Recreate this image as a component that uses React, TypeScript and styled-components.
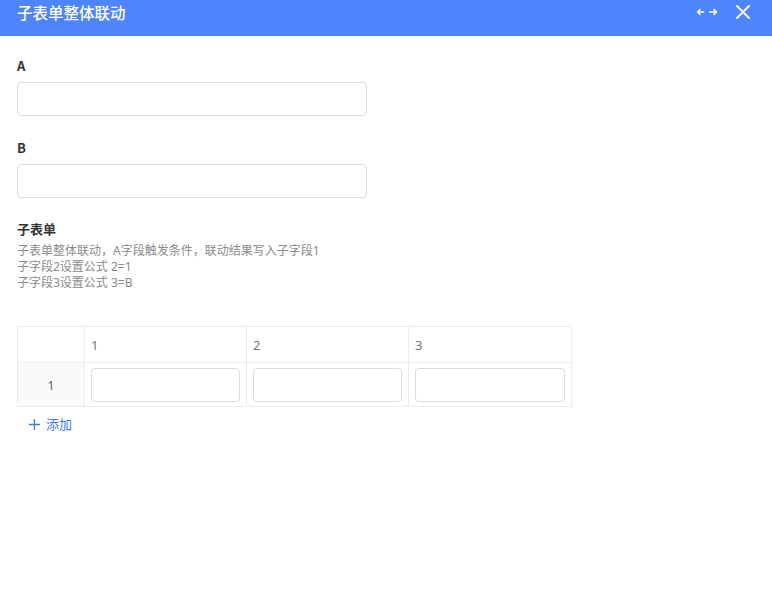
import React from "react";
import styled, { createGlobalStyle } from "styled-components";

const Global = createGlobalStyle`
  html, body { margin: 0; padding: 0; background: #fff; }
  body { font-family: "Noto Sans", "Noto Sans CJK SC", sans-serif; }
  * { box-sizing: border-box; }
`;

const Page = styled.div`
  width: 772px;
  height: 610px;
  background: #fff;
  display: flex;
  flex-direction: column;
`;

const Header = styled.div`
  height: 36px;
  background: #4e84fe;
  display: flex;
  align-items: flex-start;
  justify-content: space-between;
  padding: 0 22px 0 17px;
`;

const Title = styled.div`
  color: #fff;
  font-family: "Noto Sans CJK SC", sans-serif;
  font-size: 15.5px;
  font-weight: 500;
  line-height: 24px;
`;

const Actions = styled.div`
  display: flex;
  align-items: center;
  gap: 18px;
  height: 24px;
`;

const IconBtn = styled.span`
  display: flex;
  align-items: center;
  color: #fff;
`;

const Body = styled.div`
  padding: 0 17px;
  display: flex;
  flex-direction: column;
`;

const Field = styled.div<{ $top: number }>`
  margin-top: ${(p) => p.$top}px;
  display: flex;
  flex-direction: column;
`;

const Label = styled.div`
  font-family: "Noto Sans CJK SC", sans-serif;
  font-size: 13px;
  font-weight: 700;
  color: #333;
  line-height: 18px;
  margin-bottom: 7px;
`;

const Input = styled.input`
  width: 350px;
  height: 34px;
  border: 1px solid #dcdcdc;
  border-radius: 4px;
  outline: none;
  background: #fff;
`;

const SubTitle = styled.div`
  font-family: "Noto Sans CJK SC", sans-serif;
  font-size: 13px;
  font-weight: 700;
  color: #333;
  line-height: 18px;
  margin-bottom: 5px;
`;

const Desc = styled.div`
  font-family: "Noto Sans", "Noto Sans CJK SC", sans-serif;
  font-size: 12px;
  color: #8a8a8a;
  line-height: 16px;
`;

const Table = styled.div`
  margin-top: 35px;
  width: 555px;
  display: grid;
  grid-template-columns: 67px 162px 162px 163px;
  border: 1px solid #ececec;
  border-radius: 3px;
  border-right: none;
  border-bottom: none;
`;

const HeadCell = styled.div`
  height: 36px;
  border-right: 1px solid #ececec;
  border-bottom: 1px solid #ececec;
  padding: 0 6px;
  display: flex;
  align-items: center;
  font-family: "Noto Sans", sans-serif;
  font-size: 13px;
  color: #777;
`;

const IndexCell = styled.div`
  height: 44px;
  background: #fafafa;
  border-right: 1px solid #ececec;
  border-bottom: 1px solid #ececec;
  display: flex;
  align-items: center;
  justify-content: center;
  font-family: "Noto Sans", sans-serif;
  font-size: 13px;
  color: #666;
`;

const BodyCell = styled.div`
  height: 44px;
  border-right: 1px solid #ececec;
  border-bottom: 1px solid #ececec;
  padding: 5px 6px;
`;

const CellInput = styled.input`
  width: 100%;
  height: 34px;
  border: 1px solid #dcdcdc;
  border-radius: 4px;
  outline: none;
  background: #fff;
`;

const AddBtn = styled.div`
  margin-top: 8px;
  margin-left: 12px;
  display: flex;
  align-items: center;
  gap: 6px;
  color: #3d7bf2;
  font-family: "Noto Sans CJK SC", sans-serif;
  font-size: 13px;
  line-height: 18px;
`;

export default function App() {
  return (
    <Page>
      <Global />
      <Header>
        <Title>子表单整体联动</Title>
        <Actions>
          <IconBtn>
            <svg width="22" height="10" viewBox="0 0 22 10" fill="none" stroke="#fff" strokeWidth="1.6" strokeLinecap="round" strokeLinejoin="round">
              <path d="M1.5 5h6M4 2.5L1.5 5 4 7.5" />
              <path d="M13.5 5h7M18 2.5L20.5 5 18 7.5" />
            </svg>
          </IconBtn>
          <IconBtn>
            <svg width="14" height="14" viewBox="0 0 14 14" fill="none" stroke="#fff" strokeWidth="1.8" strokeLinecap="round">
              <path d="M1 1l12 12M13 1L1 13" />
            </svg>
          </IconBtn>
        </Actions>
      </Header>
      <Body>
        <Field $top={21}>
          <Label>A</Label>
          <Input />
        </Field>
        <Field $top={23}>
          <Label>B</Label>
          <Input />
        </Field>
        <Field $top={22}>
          <SubTitle>子表单</SubTitle>
          <Desc>子表单整体联动，A字段触发条件，联动结果写入子字段1</Desc>
          <Desc>子字段2设置公式 2=1</Desc>
          <Desc>子字段3设置公式 3=B</Desc>
        </Field>
        <Table>
          <HeadCell />
          <HeadCell>1</HeadCell>
          <HeadCell>2</HeadCell>
          <HeadCell>3</HeadCell>
          <IndexCell>1</IndexCell>
          <BodyCell><CellInput /></BodyCell>
          <BodyCell><CellInput /></BodyCell>
          <BodyCell><CellInput /></BodyCell>
        </Table>
        <AddBtn>
          <svg width="11" height="11" viewBox="0 0 11 11" stroke="#3d7bf2" strokeWidth="1.3">
            <path d="M5.5 0v11M0 5.5h11" />
          </svg>
          添加
        </AddBtn>
      </Body>
    </Page>
  );
}
